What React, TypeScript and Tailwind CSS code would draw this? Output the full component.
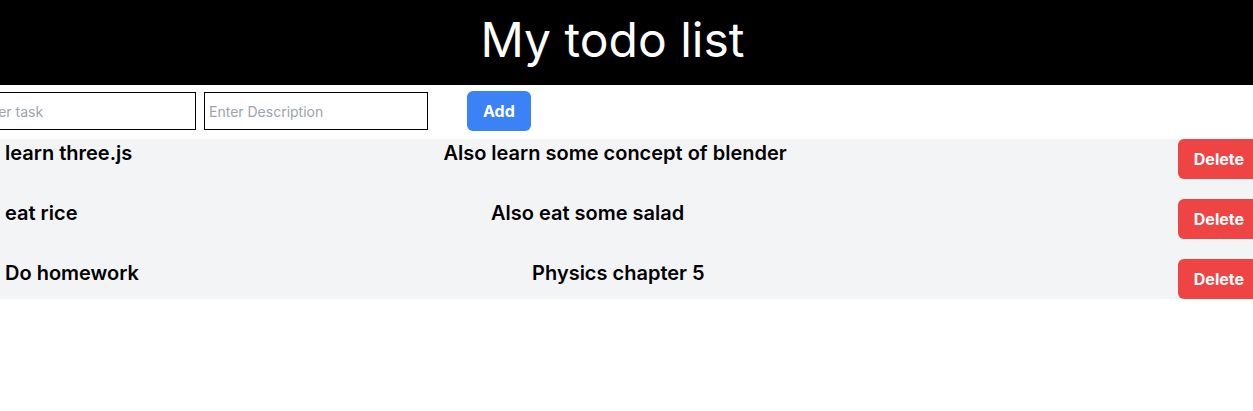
const todos = [
  { title: "learn three.js", desc: "Also learn some concept of blender" },
  { title: "eat rice", desc: "Also eat some salad" },
  { title: "Do homework", desc: "Physics chapter 5" },
];

export default function App() {
  return (
    <div className="w-full min-h-screen overflow-hidden bg-white font-['Inter',sans-serif] text-black">
      {/* Header */}
      <header className="h-[85px] bg-black pt-[16px] pr-[28px] text-center">
        <h1 className="text-5xl leading-[48px] font-normal text-white">My todo list</h1>
      </header>

      {/* New todo form */}
      <div className="mt-[6px] mb-[8px] flex items-center -ml-[28px]">
        <input
          type="text"
          placeholder="Enter task"
          className="h-[38px] w-[224px] border border-black px-1 text-sm placeholder:text-[#9ca3af] outline-none"
        />
        <input
          type="text"
          placeholder="Enter Description"
          className="ml-2 h-[38px] w-[224px] border border-black px-1 text-sm placeholder:text-[#9ca3af] outline-none"
        />
        <button className="ml-[39px] h-10 rounded-md bg-[#3b82f6] px-4 font-bold text-white">Add</button>
      </div>

      {/* Todo list */}
      <div className="flex w-[1260px] flex-col gap-5 bg-[#f3f4f6] pl-[5px]">
        {todos.map((t) => (
          <div key={t.title} className="flex h-10 items-start justify-between">
            <h2 className="text-xl font-semibold">{t.title}</h2>
            <p className="text-xl font-semibold">{t.desc}</p>
            <button className="ml-20 h-10 rounded-md bg-[#ef4444] px-4 font-bold text-white">Delete</button>
          </div>
        ))}
      </div>
    </div>
  );
}
